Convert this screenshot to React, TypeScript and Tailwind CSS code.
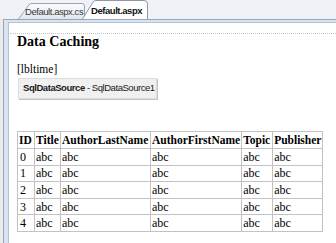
import React from 'react';

const headers = ['ID', 'Title', 'AuthorLastName', 'AuthorFirstName', 'Topic', 'Publisher'];
const colWidths = ['w-[17px]', 'w-[26px]', 'w-[90px]', 'w-[90px]', 'w-[31px]', 'w-[49px]'];
const rows = [0, 1, 2, 3, 4];

const ui = "font-['Liberation_Sans',Arial,sans-serif] text-[9.5px] tracking-[-0.45px]";
const serif = "font-['Liberation_Serif','Times_New_Roman',serif]";

const DocTabs: React.FC = () => {
  return (
    <div className="flex h-[19px] shrink-0 items-end bg-[#f1f2f8] pl-[18px]">
      <div className="relative h-[16px] w-[68px]">
        <svg className="absolute inset-0" width="68" height="16" viewBox="0 0 68 16">
          <defs>
            <linearGradient id="tabOff" x1="0" y1="0" x2="0" y2="1">
              <stop offset="0" stopColor="#fbfcfd" />
              <stop offset="1" stopColor="#e2e6ee" />
            </linearGradient>
          </defs>
          <path
            d="M0.5 16 L11 1.8 Q12 0.5 14 0.5 L64 0.5 Q66.5 0.5 66.5 3 L66.5 16"
            fill="url(#tabOff)"
            stroke="#9aa3b2"
          />
        </svg>
        <span className={`relative block pl-[7px] pt-[3px] leading-[12px] text-[#3a3a3a] ${ui}`}>
          Default.aspx.cs
        </span>
      </div>
      <div className="relative -ml-[4px] h-[19px] w-[66px]">
        <svg className="absolute inset-0" width="66" height="19" viewBox="0 0 66 19">
          <path
            d="M0.5 19 L11 2.2 Q12 0.5 14 0.5 L62 0.5 Q65.5 0.5 65.5 4 L65.5 19"
            fill="#ffffff"
            stroke="#8d98ab"
          />
        </svg>
        <span className={`relative block pl-[9px] pt-[5px] font-bold leading-[12px] text-[#111] ${ui}`}>
          Default.aspx
        </span>
      </div>
    </div>
  );
};

const App: React.FC = () => {
  return (
    <div className="flex h-[243px] w-[336px] flex-col overflow-hidden bg-[#ececee]">
      <DocTabs />
      <div className="ml-[3px] flex flex-1 flex-col border-l border-t border-[#9ba5b3] bg-[#d7e5f2] pl-[4px] pt-[2px]">
        <div className="flex-1 border-l border-t border-[#b3c3d3] bg-white pt-[10px]">
          <div className="ml-px border-t border-dotted border-[#c4c4c4] pl-[7px]">
            <h2 className={`text-[14px] font-bold leading-[16px] text-black ${serif}`}>Data Caching</h2>

            <p className={`mt-[12px] text-[11.5px] leading-[14px] text-black ${serif}`}>[lbltime]</p>

            <div
              className={`ml-px mt-[2px] flex h-[21px] w-[139px] items-center border border-[#dcdcdc] bg-[#f0f0f0] pl-[4px] text-[#1a1a1a] shadow-[1px_1px_0_#c4c4c4] ${ui}`}
            >
              <span className="font-bold">SqlDataSource</span>
              <span className="whitespace-pre"> - SqlDataSource1</span>
            </div>

            <table className={`mt-[32px] table-fixed border-collapse text-black ${serif}`}>
              <thead>
                <tr className="h-[17px]">
                  {headers.map((h, i) => (
                    <th
                      key={h}
                      className={`${colWidths[i]} whitespace-nowrap border border-[#c2c2c2] px-[1px] text-left text-[11.5px] font-bold leading-[14px]`}
                    >
                      {h}
                    </th>
                  ))}
                </tr>
              </thead>
              <tbody>
                {rows.map((r) => (
                  <tr key={r} className="h-[16.6px]">
                    <td className="border border-[#c2c2c2] px-[2px] text-[12px] leading-[14px]">{r}</td>
                    <td className="border border-[#c2c2c2] px-[1px] text-[12px] leading-[14px]">abc</td>
                    <td className="border border-[#c2c2c2] px-[1px] text-[12px] leading-[14px]">abc</td>
                    <td className="border border-[#c2c2c2] px-[1px] text-[12px] leading-[14px]">abc</td>
                    <td className="border border-[#c2c2c2] px-[1px] text-[12px] leading-[14px]">abc</td>
                    <td className="border border-[#c2c2c2] px-[1px] text-[12px] leading-[14px]">abc</td>
                  </tr>
                ))}
              </tbody>
            </table>
          </div>
        </div>
      </div>
    </div>
  );
};

export default App;
